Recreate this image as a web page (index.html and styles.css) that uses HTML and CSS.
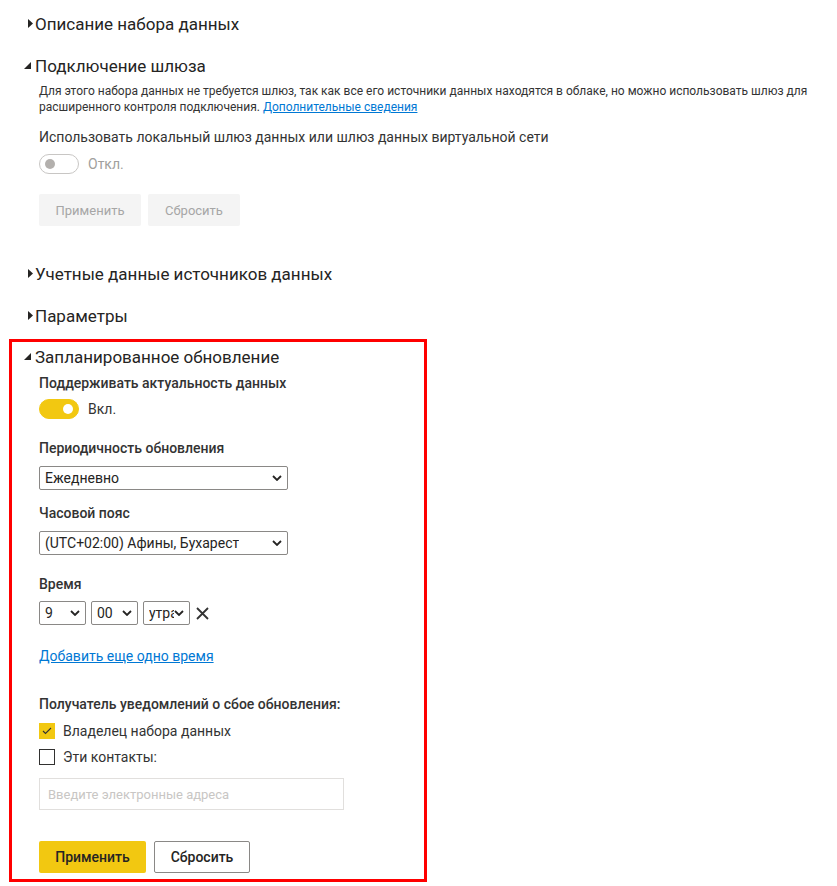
FILE: index.html
```html
<!DOCTYPE html>
<html lang="ru">
<head>
    <meta charset="UTF-8">
    <meta name="viewport" content="width=device-width, initial-scale=1.0">
    <title>Параметры набора данных</title>
    <link rel="stylesheet" href="styles.css">
</head>
<body>
    <div class="page">
        <section class="section">
            <h2 class="section-title"><span class="caret"><svg width="6" height="10" viewBox="0 0 6 10"><polygon points="0,0 5,4.5 0,9" fill="#252423"/></svg></span>Описание набора данных</h2>
        </section>

        <section class="section">
            <h2 class="section-title"><span class="caret open"><svg width="8" height="8" viewBox="0 0 8 8"><polygon points="7,0 7,7 0,7" fill="#252423"/></svg></span>Подключение шлюза</h2>
            <div class="section-body">
                <p class="note">Для этого набора данных не требуется шлюз, так как все его источники данных находятся в облаке, но можно использовать шлюз для расширенного контроля подключения. <a href="#">Дополнительные сведения</a></p>
                <p class="option">Использовать локальный шлюз данных или шлюз данных виртуальной сети</p>
                <div class="toggle-row">
                    <span class="toggle"><span class="knob"></span></span>
                    <span class="toggle-text muted">Откл.</span>
                </div>
                <div class="actions">
                    <button class="btn btn-disabled apply">Применить</button>
                    <button class="btn btn-disabled reset">Сбросить</button>
                </div>
            </div>
        </section>

        <section class="section">
            <h2 class="section-title"><span class="caret"><svg width="6" height="10" viewBox="0 0 6 10"><polygon points="0,0 5,4.5 0,9" fill="#252423"/></svg></span>Учетные данные источников данных</h2>
        </section>

        <section class="section">
            <h2 class="section-title"><span class="caret"><svg width="6" height="10" viewBox="0 0 6 10"><polygon points="0,0 5,4.5 0,9" fill="#252423"/></svg></span>Параметры</h2>
        </section>

        <section class="section highlight">
            <h2 class="section-title"><span class="caret open"><svg width="8" height="8" viewBox="0 0 8 8"><polygon points="7,0 7,7 0,7" fill="#252423"/></svg></span>Запланированное обновление</h2>
            <div class="section-body">
                <div class="field-label first">Поддерживать актуальность данных</div>
                <div class="toggle-row">
                    <span class="toggle on"><span class="knob"></span></span>
                    <span class="toggle-text">Вкл.</span>
                </div>

                <div class="field-label">Периодичность обновления</div>
                <div class="select wide">
                    <span class="select-value">Ежедневно</span>
                    <svg class="chevron" width="10" height="6" viewBox="0 0 10 6"><polyline points="1,1 5,5 9,1" fill="none" stroke="#252423" stroke-width="1.8"/></svg>
                </div>

                <div class="field-label near">Часовой пояс</div>
                <div class="select wide">
                    <span class="select-value">(UTC+02:00) Афины, Бухарест</span>
                    <svg class="chevron" width="10" height="6" viewBox="0 0 10 6"><polyline points="1,1 5,5 9,1" fill="none" stroke="#252423" stroke-width="1.8"/></svg>
                </div>

                <div class="field-label">Время</div>
                <div class="time-row">
                    <div class="select small">
                        <span class="select-value">9</span>
                        <svg class="chevron" width="10" height="6" viewBox="0 0 10 6"><polyline points="1,1 5,5 9,1" fill="none" stroke="#252423" stroke-width="1.8"/></svg>
                    </div>
                    <div class="select small">
                        <span class="select-value">00</span>
                        <svg class="chevron" width="10" height="6" viewBox="0 0 10 6"><polyline points="1,1 5,5 9,1" fill="none" stroke="#252423" stroke-width="1.8"/></svg>
                    </div>
                    <div class="select small">
                        <span class="select-value">утра</span>
                        <svg class="chevron" width="10" height="6" viewBox="0 0 10 6"><polyline points="1,1 5,5 9,1" fill="none" stroke="#252423" stroke-width="1.8"/></svg>
                    </div>
                    <svg class="remove" width="13" height="13" viewBox="0 0 13 13"><path d="M1 1L12 12M12 1L1 12" stroke="#333" stroke-width="1.8"/></svg>
                </div>

                <a href="#" class="add-link">Добавить еще одно время</a>

                <div class="field-label notify">Получатель уведомлений о сбое обновления:</div>
                <label class="check-row">
                    <span class="checkbox checked"><svg width="12" height="10" viewBox="0 0 12 10"><polyline points="2,5 4.5,7.5 10,2" fill="none" stroke="#333" stroke-width="1.1"/></svg></span>
                    Владелец набора данных
                </label>
                <label class="check-row">
                    <span class="checkbox"></span>
                    Эти контакты:
                </label>
                <input class="email" type="text" placeholder="Введите электронные адреса">

                <div class="actions final">
                    <button class="btn btn-primary">Применить</button>
                    <button class="btn btn-secondary">Сбросить</button>
                </div>
            </div>
        </section>
    </div>
</body>
</html>
```

FILE: styles.css
```css
:root {
    --text-color: #252423;
    --body-text-color: #333333;
    --muted-color: #a19f9d;
    --link-color: #0078d4;
    --accent-color: #f2c811;
    --disabled-background: #f4f4f4;
    --control-border: #8a8886;
    --highlight-color: #ff0000;
}
body {
    margin: 0;
    background: #ffffff;
    color: var(--text-color);
    font-family: Roboto, 'Noto Sans', sans-serif;
}
.page {
    padding: 6px 9px 0;
}
.section {
    border: 3px solid transparent;
    padding-top: 3px;
    margin-top: 9px;
}
.section:first-child {
    margin-top: 0;
}
.section.highlight {
    border-color: var(--highlight-color);
    width: 418px;
    box-sizing: border-box;
    margin-top: 8px;
    padding-bottom: 6px;
}
.section-title {
    display: flex;
    align-items: center;
    margin: 0;
    padding-left: 12px;
    height: 24px;
    font-size: 17px;
    font-weight: 400;
    color: var(--text-color);
}
.caret {
    display: inline-flex;
    width: 11px;
    padding-left: 4px;
    box-sizing: border-box;
}
.caret.open {
    padding-left: 0;
}
.section-body {
    padding: 5px 0 18px 27px;
    font-size: 14px;
}
.highlight .section-body {
    padding: 4px 0 0 27px;
}
.note {
    margin: 0;
    font-size: 12px;
    line-height: 16px;
    color: var(--body-text-color);
    max-width: 775px;
}
.note a {
    color: var(--link-color);
}
.option {
    margin: 12px 0 0;
    line-height: 20px;
    color: var(--body-text-color);
}
.toggle-row {
    display: flex;
    align-items: center;
    gap: 9px;
    margin-top: 7px;
}
.highlight .toggle-row {
    margin-top: 6px;
}
.toggle {
    width: 40px;
    height: 20px;
    box-sizing: border-box;
    border: 1px solid #c8c6c4;
    border-radius: 10px;
    display: flex;
    align-items: center;
    padding: 0 5px;
}
.knob {
    width: 10px;
    height: 10px;
    border-radius: 50%;
    background: #b3b0ad;
}
.toggle.on {
    background: var(--accent-color);
    border-color: var(--accent-color);
    justify-content: flex-end;
}
.toggle.on .knob {
    background: #ffffff;
}
.toggle-text {
    font-size: 14px;
    color: var(--body-text-color);
}
.toggle-text.muted {
    color: var(--muted-color);
}
.actions {
    display: flex;
    gap: 7px;
    margin-top: 20px;
}
.btn {
    height: 32px;
    border: none;
    border-radius: 2px;
    font-family: inherit;
    font-size: 13px;
    padding: 0;
}
.btn-disabled {
    background: var(--disabled-background);
    color: #a6a6a6;
}
.btn.apply {
    width: 102px;
}
.btn.reset {
    width: 92px;
}
.actions.final {
    gap: 8px;
    margin-top: 31px;
}
.btn-primary {
    background: var(--accent-color);
    color: var(--text-color);
    font-size: 14px;
    font-weight: 500;
    width: 107px;
}
.btn-secondary {
    background: #ffffff;
    border: 1px solid var(--control-border);
    color: var(--text-color);
    font-size: 14px;
    font-weight: 500;
    width: 96px;
}
.field-label {
    font-size: 14px;
    font-weight: 500;
    line-height: 20px;
    color: var(--body-text-color);
    margin-top: 19px;
}
.field-label.first {
    margin-top: 0;
}
.field-label.near {
    margin-top: 13px;
}
.field-label.notify {
    margin-top: 28px;
}
.select {
    display: flex;
    align-items: center;
    justify-content: space-between;
    height: 24px;
    box-sizing: border-box;
    border: 1px solid var(--control-border);
    border-radius: 2px;
    padding: 0 5px 0 5px;
    margin-top: 8px;
    overflow: hidden;
    font-size: 14px;
    color: var(--text-color);
}
.select.wide {
    width: 249px;
}
.time-row {
    display: flex;
    align-items: center;
    gap: 5px;
    margin-top: 7px;
}
.select.small {
    width: 47px;
    margin-top: 0;
}
.select-value {
    white-space: nowrap;
    overflow: hidden;
    min-width: 0;
}
.chevron {
    flex-shrink: 0;
}
.remove {
    margin-left: 1px;
}
.add-link {
    display: block;
    width: max-content;
    margin-top: 21px;
    line-height: 20px;
    color: var(--link-color);
}
.check-row {
    display: flex;
    align-items: center;
    gap: 8px;
    height: 20px;
    margin-top: 7px;
    color: var(--body-text-color);
}
.check-row + .check-row {
    margin-top: 6px;
}
.checkbox {
    width: 16px;
    height: 16px;
    box-sizing: border-box;
    border: 1px solid #323130;
    display: flex;
    align-items: center;
    justify-content: center;
}
.checkbox.checked {
    background: var(--accent-color);
    border-color: var(--accent-color);
}
.email {
    display: block;
    width: 305px;
    height: 32px;
    box-sizing: border-box;
    margin-top: 11px;
    border: 1px solid #e1dfdd;
    padding: 0 8px;
    font-family: inherit;
    font-size: 13px;
}
.email::placeholder {
    color: #c8c6c4;
}
```
